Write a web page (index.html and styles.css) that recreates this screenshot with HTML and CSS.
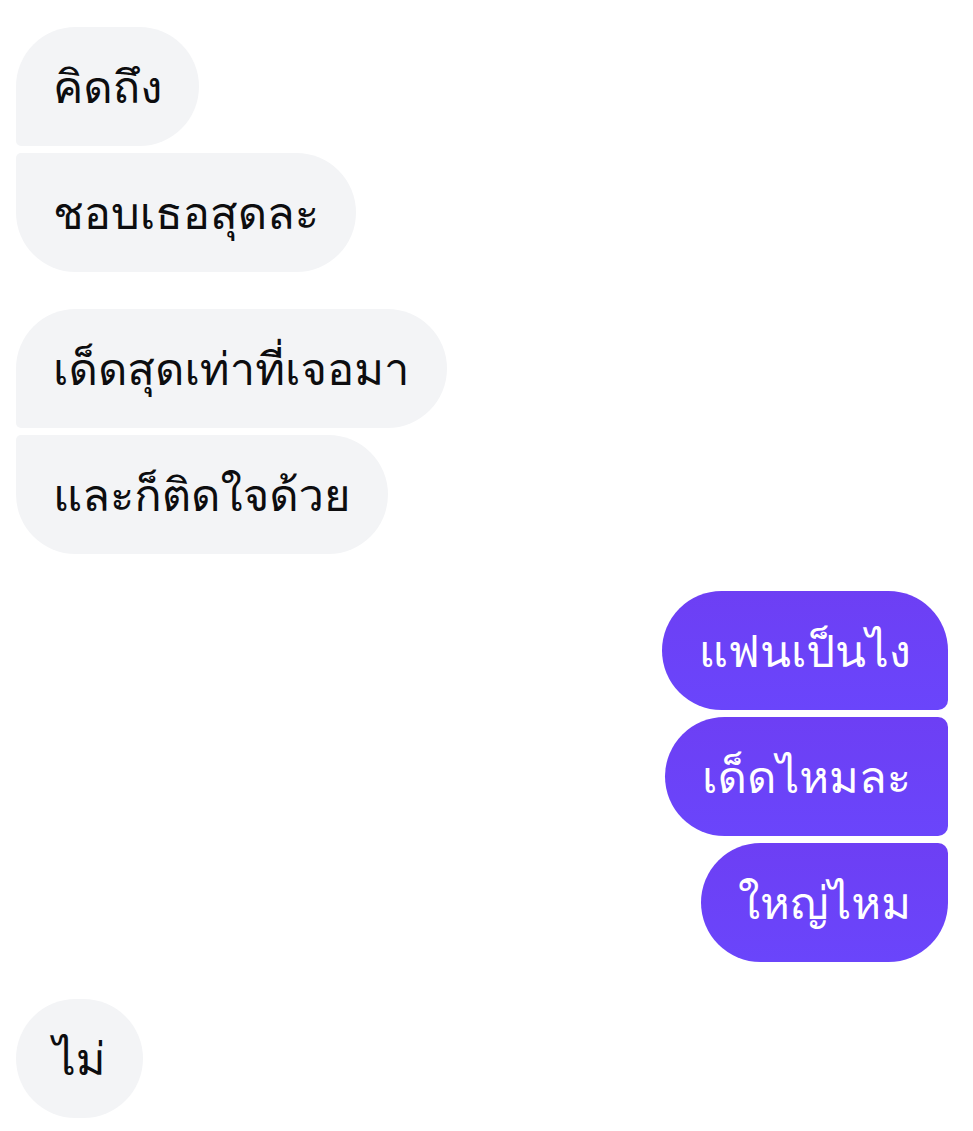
FILE: index.html
```html
<!DOCTYPE html>
<html lang="th">
<head>
<meta charset="utf-8">
<link rel="stylesheet" href="styles.css">
</head>
<body>
<div class="chat">
  <div class="group in">
    <div class="bubble first">คิดถึง</div>
    <div class="bubble last">ชอบเธอสุดละ</div>
  </div>
  <div class="group in">
    <div class="bubble first">เด็ดสุดเท่าที่เจอมา</div>
    <div class="bubble last">และก็ติดใจด้วย</div>
  </div>
  <div class="group out">
    <div class="bubble first">แฟนเป็นไง</div>
    <div class="bubble mid">เด็ดไหมละ</div>
    <div class="bubble last">ใหญ่ไหม</div>
  </div>
  <div class="group in">
    <div class="bubble single">ไม่</div>
  </div>
</div>
</body>
</html>
```
FILE: styles.css
```css
html, body {
  margin: 0;
  background: #ffffff;
}
.chat {
  display: flex;
  flex-direction: column;
  gap: 37px;
  padding: 27px 25px 0 16px;
  font-family: "Loma", "Garuda", "Sawasdee", "Tlwg Typo", "Noto Sans Thai Looped", "Noto Sans Thai", sans-serif;
}
.group {
  display: flex;
  flex-direction: column;
  gap: 7px;
}
.group.in { align-items: flex-start; }
.group.out { align-items: flex-end; }
.bubble {
  height: 119px;
  box-sizing: border-box;
  display: flex;
  align-items: center;
  padding: 0 37px;
  font-size: 45.3px;
  border-radius: 60px;
  white-space: nowrap;
}
.in .bubble {
  background: #f3f4f6;
  color: #0d0d0f;
}
.out .bubble {
  background: linear-gradient(#6d3ff4, #6a45fb);
  color: #ffffff;
}
.in .first { border-bottom-left-radius: 5px; }
.in .last { border-top-left-radius: 5px; }
.out .first { border-bottom-right-radius: 10px; }
.out .mid { border-top-right-radius: 10px; border-bottom-right-radius: 10px; }
.out .last { border-top-right-radius: 10px; }
```
